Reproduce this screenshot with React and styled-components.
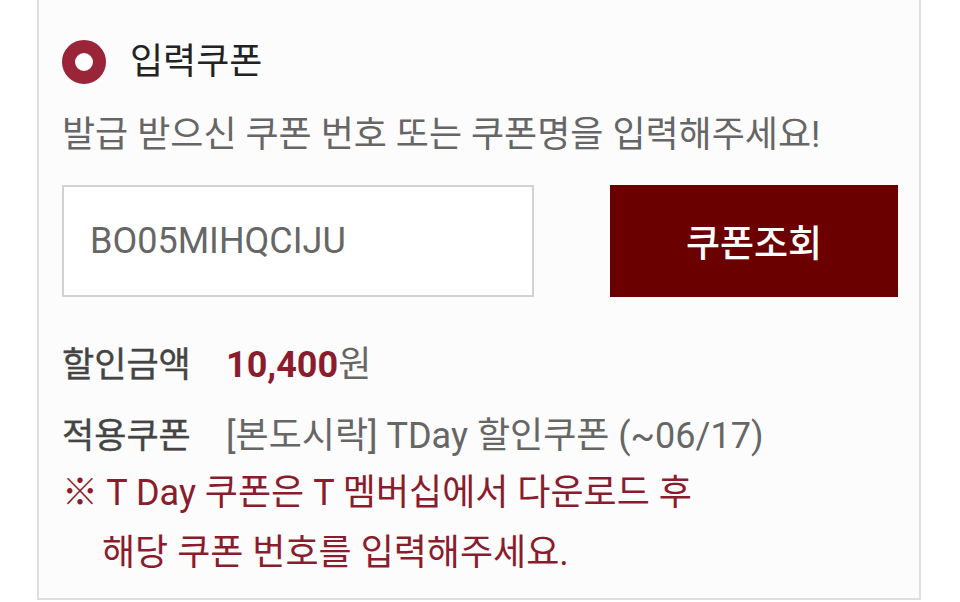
import React from 'react';
import styled, { createGlobalStyle } from 'styled-components';

const GlobalStyle = createGlobalStyle`
  html, body {
    margin: 0;
    padding: 0;
    background: #ffffff;
  }
  body {
    font-family: Roboto, "Noto Sans CJK KR", sans-serif;
  }
`;

const Page = styled.div`
  width: 960px;
  height: 602px;
  overflow: hidden;
  background: #fff;
`;

const Panel = styled.section`
  margin-left: 37px;
  width: 884px;
  height: 600px;
  box-sizing: border-box;
  border-left: 2px solid #dedede;
  border-right: 2px solid #dedede;
  border-bottom: 2px solid #dedede;
  background: #fcfcfc;
  padding: 38px 20px 0 23px;
`;

const Header = styled.div`
  display: flex;
  align-items: center;
  gap: 24px;
`;

const Radio = styled.span`
  width: 44px;
  height: 44px;
  box-sizing: border-box;
  border-radius: 50%;
  border: 13px solid #9b2538;
  background: #fff;
  flex-shrink: 0;
`;

const Title = styled.h2`
  margin: 0;
  font-size: 36px;
  font-weight: 400;
  color: #222;
  line-height: 48px;
`;

const Guide = styled.p`
  margin: 25px 0 0;
  font-size: 36px;
  line-height: 48px;
  color: #666;
  white-space: nowrap;
`;

const SearchRow = styled.div`
  display: flex;
  gap: 76px;
  margin-top: 26px;
`;

const CodeInput = styled.input`
  flex-shrink: 0;
  width: 472px;
  height: 112px;
  box-sizing: border-box;
  border: 2px solid #d2d2d2;
  background: #fff;
  padding: 0 26px;
  font-family: inherit;
  font-size: 36px;
  color: #666;
  outline: none;
`;

const SearchButton = styled.button`
  flex-shrink: 0;
  width: 288px;
  height: 112px;
  border: none;
  background: #6b0000;
  color: #fff;
  font-family: inherit;
  font-size: 37px;
  font-weight: 500;
  cursor: pointer;
`;

const InfoList = styled.dl`
  margin: 40px 0 0;
`;

const InfoRow = styled.div`
  display: flex;
  align-items: baseline;
  margin-bottom: ${p => p.$gap || 0}px;
`;

const Label = styled.dt`
  width: 164px;
  flex-shrink: 0;
  font-size: 35px;
  font-weight: 400;
  color: #444;
  line-height: 56px;
  -webkit-text-stroke: 0.4px #444;
`;

const Value = styled.dd`
  margin: 0;
  font-size: 36px;
  color: #666;
  line-height: 56px;
  white-space: nowrap;
`;

const Amount = styled.strong`
  font-weight: 700;
  color: #8a1c2e;
`;

const Notes = styled.div`
  margin-top: -2px;
`;

const Notice = styled.p`
  margin: 0;
  font-size: 36px;
  line-height: 60px;
  color: #8a1c2e;
  white-space: nowrap;
  padding-left: ${p => p.$indent || 0}px;
`;

export default function App() {
  return (
    <Page>
      <GlobalStyle />
      <Panel>
        <Header>
          <Radio />
          <Title>입력쿠폰</Title>
        </Header>
        <Guide>발급 받으신 쿠폰 번호 또는 쿠폰명을 입력해주세요!</Guide>
        <SearchRow>
          <CodeInput defaultValue="BO05MIHQCIJU" />
          <SearchButton>쿠폰조회</SearchButton>
        </SearchRow>
        <InfoList>
          <InfoRow $gap={14}>
            <Label>할인금액</Label>
            <Value><Amount>10,400</Amount>원</Value>
          </InfoRow>
          <InfoRow>
            <Label>적용쿠폰</Label>
            <Value>[본도시락] TDay 할인쿠폰 (~06/17)</Value>
          </InfoRow>
        </InfoList>
        <Notes>
          <Notice>※ T Day 쿠폰은 T 멤버십에서 다운로드 후</Notice>
          <Notice $indent={40}>해당 쿠폰 번호를 입력해주세요.</Notice>
        </Notes>
      </Panel>
    </Page>
  );
}
